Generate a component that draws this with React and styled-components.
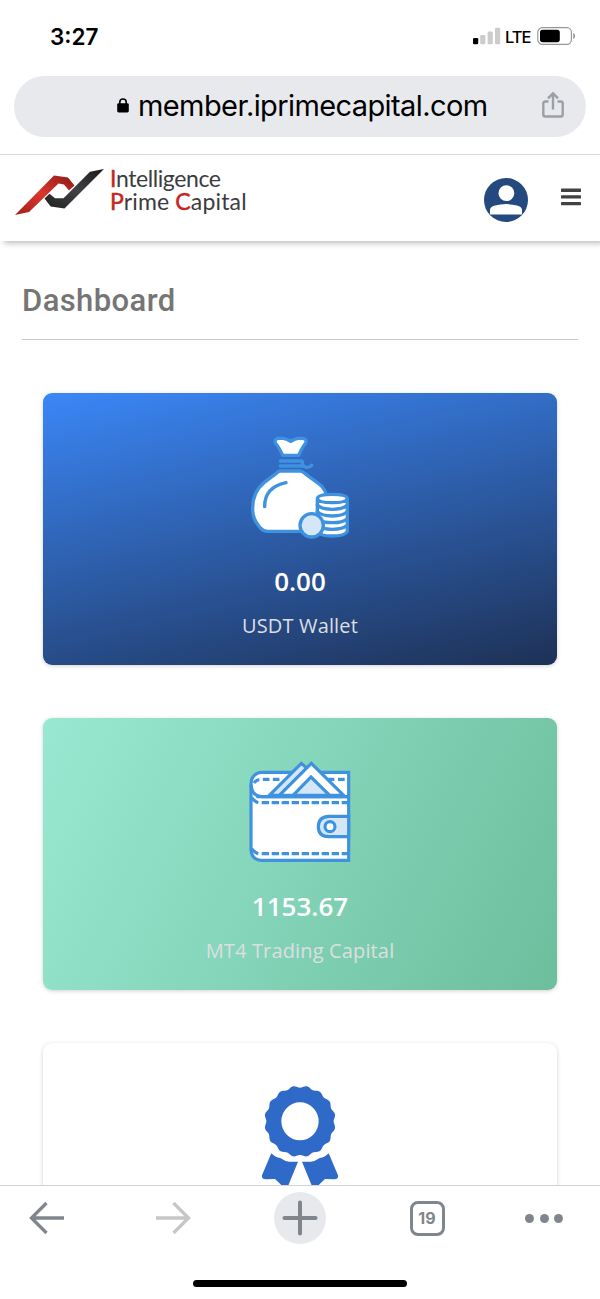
import React from 'react'
import styled, { createGlobalStyle } from 'styled-components'

const scallop = (cx, cy, r, amp, count) => {
  const points = []
  for (let i = 0; i < 192; i++) {
    const a = (i / 192) * Math.PI * 2
    const d = r - amp * Math.cos(a * count)
    points.push(`${(cx + d * Math.sin(a)).toFixed(1)} ${(cy - d * Math.cos(a)).toFixed(1)}`)
  }
  return `M${points.join('L')}Z`
}

const SignalIcon = () => (
  <svg width="28" height="18" viewBox="0 0 28 18">
    <rect x="0" y="11" width="5.2" height="6.2" rx="1.2" fill="#000" />
    <rect x="7.2" y="8" width="5.2" height="9.2" rx="1.2" fill="#ccc" />
    <rect x="14.6" y="4.5" width="5.2" height="12.7" rx="1.2" fill="#ccc" />
    <rect x="22" y="0.8" width="5.2" height="16.4" rx="1.2" fill="#ccc" />
  </svg>
)

const BatteryIcon = () => (
  <svg width="39" height="18" viewBox="0 0 39 18">
    <rect x="0.8" y="0.7" width="33.6" height="16.6" rx="4.6" fill="none" stroke="#999" strokeWidth="1.2" />
    <rect x="3" y="2.8" width="19.8" height="12.4" rx="2.6" fill="#000" />
    <path d="M36.2 6v6c2.6-1 2.6-5 0-6z" fill="#999" />
  </svg>
)

const LockIcon = () => (
  <svg width="12" height="15" viewBox="0 0 12 15">
    <path d="M2.8 7V4.2a3.2 3.2 0 0 1 6.4 0V7" fill="none" stroke="#000" strokeWidth="1.6" />
    <rect x="0.2" y="5.2" width="11.6" height="9.2" rx="1.4" fill="#000" />
  </svg>
)

const ShareIcon = () => (
  <svg width="22" height="27" viewBox="0 0 22 27" fill="none" stroke="#9aa0a6" strokeWidth="2.4">
    <path d="M6.500 9.500H3.200Q1.300 9.500 1.300 11.500v11q0 2 2 2h15.400q2 0 2-2v-11q0-2-1.900-2H15.500" />
    <path d="M11 17.500V1.800M6 6.300l5-5 5 5" />
  </svg>
)

const LogoMark = () => (
  <svg width="90" height="48" viewBox="0 0 90 48">
    <defs>
      <linearGradient id="red" x1="0" y1="1" x2="1" y2="0">
        <stop offset="0" stopColor="#a71d1a" />
        <stop offset="0.5" stopColor="#d8372f" />
        <stop offset="1" stopColor="#8d1916" />
      </linearGradient>
      <linearGradient id="dark" x1="0" y1="1" x2="1" y2="0">
        <stop offset="0" stopColor="#1f1f20" />
        <stop offset="0.5" stopColor="#414244" />
        <stop offset="1" stopColor="#19191a" />
      </linearGradient>
    </defs>
    <path d="M0 46 39 6.500 53 8.500 59.500 16.500 54 21.500 49 15.500 43.500 14.500 14 43z" fill="url(#red)" />
    <path d="M89 0 75 2.800 48.500 29.300 40 29.300 34.500 24.700 29.500 29.500 35.700 37.500 49.500 39.400z" fill="url(#dark)" />
  </svg>
)

const UserIcon = () => (
  <svg width="44" height="44" viewBox="0 0 44 44">
    <circle cx="22" cy="22" r="22" fill="#24497f" />
    <circle cx="22.400" cy="15.200" r="7.900" fill="#fff" />
    <path d="M6 36.500V32q0-3 5-4.400 11-3 22 0 5 1.400 5 4.400v4.500z" fill="#fff" />
  </svg>
)

const MenuIcon = () => (
  <svg width="20" height="18" viewBox="0 0 20 18" fill="#424242">
    <rect y="0.600" width="20" height="3.300" rx="0.600" />
    <rect y="7.300" width="20" height="3.300" rx="0.600" />
    <rect y="13.900" width="20" height="3.300" rx="0.600" />
  </svg>
)

const MoneyBagIcon = () => (
  <svg width="102" height="104" viewBox="57 48 306 312" stroke="#3f92df" strokeWidth="10" strokeLinejoin="round" strokeLinecap="round">
    <path d="M158 106C151 91 145 79 136 69Q132 56 146 55H160Q172 57 182 64Q192 57 204 55H217Q232 56 227 69C218 79 213 91 206 106z" fill="#fff" />
    <path d="M151 123H215Q218 124 217 129Q216 139 229 142Q240 143 245 136M151 138H217" fill="none" />
    <path d="M150 153H211Q218 155 224 160L261 187Q290 205 294 245L280 334H113Q99 334 90 323Q66 296 68 264C68 232 79 207 102 188L139 160Q144 154 150 153z" fill="#fff" />
    <path d="M104 260Q103 202 168 188" fill="none" />
    <path d="M262 235V334Q268 348 307 348T352 334V235Q346 223 307 223T262 235z" fill="#fff" stroke="none" />
    <path d="M262 236Q263 223 307 223T352 236Q348 248 307 248T262 236zV334Q268 348 307 348T352 334V236" fill="none" />
    <path d="M262 255Q275 268 307 268T352 255M262 275Q275 288 307 288T352 275M262 296Q275 308 307 308T352 296M262 316Q275 328 307 328T352 316" fill="none" />
    <circle cx="245" cy="316" r="35" fill="#d5e7f7" />
  </svg>
)

const WalletIcon = () => (
  <svg width="102" height="104" viewBox="58 36 306 312" stroke="#3f92df" strokeWidth="9.5" fill="none">
    <path d="M357 70H93Q64 75 64 106V303Q67 334 96 334H357z" fill="#fff" />
    <path d="M64 106Q66 141 96 143H357" />
    <path d="M73 102Q80 91 94 91H155M296 91H314M325 91H346" strokeDasharray="20 10" />
    <path d="M119 139 215 43 232 58 151 139z" fill="#d5e7f7" />
    <path d="M149 139 245 43 342 139z" fill="#fff" />
    <path d="M190 139 244 84 300 139z" fill="#d5e7f7" />
    <path d="M80 143H357" />
    <path d="M66 146Q76 158 86 161M66 299Q76 311 86 314" />
    <path d="M96 161H357M96 314H357" strokeDasharray="22 8" />
    <path d="M357 202H297Q266 204 266 233T297 263H357z" fill="#d5e7f7" />
    <circle cx="301" cy="233" r="15" fill="#fff" />
  </svg>
)

const AwardIcon = () => (
  <svg width="80" height="110" viewBox="60 47 240 330" fill="#306ac8">
    <path fillRule="evenodd" d={scallop(180, 153, 104, 3, 16) + 'M124 153a56 57 0 1 0 112 0a56 57 0 1 0-112 0z'} />
    <path d="M94 249 66 315Q64 326 77 327L105 326 128 348Q139 355 145 345L174 274Q160 275 147 274 135 273 121 263 105 261 94 249z" />
    <path d="M266 249 294 315Q296 326 283 327L255 326 232 348Q221 355 215 345L186 274Q200 275 213 274 225 273 239 263 255 261 266 249z" />
  </svg>
)

const BackIcon = () => (
  <svg width="36" height="34" viewBox="0 0 36 34" fill="none" stroke="currentColor" strokeWidth="3.300">
    <path d="M35 17H3M17.500 2 2.500 17l15 15" />
  </svg>
)

const PlusIcon = () => (
  <svg width="36" height="36" viewBox="0 0 36 36" stroke="#80868b" strokeWidth="4" strokeLinecap="round">
    <path d="M18 2.500v31M2.500 18h31" />
  </svg>
)

const App = () => {
  return (
    <>
      <GlobalStyle />
      <Screen>
        <StatusBar>
          <Time>3:27</Time>
          <StatusIcons>
            <SignalIcon />
            <Network>LTE</Network>
            <BatteryIcon />
          </StatusIcons>
        </StatusBar>
        <AddressRow>
          <AddressBar>
            <LockIcon />
            <Url>member.iprimecapital.com</Url>
            <ShareIcon />
          </AddressBar>
        </AddressRow>
        <Header>
          <LogoMark />
          <LogoText>
            <LogoLine $spacing="-0.4px"><b>I</b>ntelligence</LogoLine>
            <LogoLine $spacing="0.15px"><b>P</b>rime <b>C</b>apital</LogoLine>
          </LogoText>
          <Profile><UserIcon /></Profile>
          <Burger><MenuIcon /></Burger>
        </Header>
        <Content>
          <Title>Dashboard</Title>
          <Cards>
            <Card $bg="linear-gradient(167deg, #3b87f7 0%, #1e3156 100%)">
              <MoneyBagIcon />
              <Amount>0.00</Amount>
              <Label>USDT Wallet</Label>
            </Card>
            <Card $bg="linear-gradient(115deg, #99e9d2 0%, #6cbe9d 100%)">
              <WalletIcon />
              <Amount>1153.67</Amount>
              <Label>MT4 Trading Capital</Label>
            </Card>
            <Card $bg="#fff">
              <AwardIcon />
            </Card>
          </Cards>
        </Content>
        <Toolbar>
          <NavButton><BackIcon /></NavButton>
          <NavButton $forward><BackIcon /></NavButton>
          <NewTab><PlusIcon /></NewTab>
          <TabCount>19</TabCount>
          <Dots><span /><span /><span /></Dots>
        </Toolbar>
        <HomeArea><HomeIndicator /></HomeArea>
      </Screen>
    </>
  )
}

export default App

const GlobalStyle = createGlobalStyle`
*{
    box-sizing: border-box;
}
body{
    margin: 0;
    background: #fff;
}
svg{
    display: block;
    flex-shrink: 0;
}
`

const Screen = styled.div`
display: flex;
flex-direction: column;
width: 600px;
height: 1299px;
overflow: hidden;
background: #fff;
`

const StatusBar = styled.div`
display: flex;
justify-content: space-between;
align-items: center;
flex-shrink: 0;
height: 76px;
padding: 0 24px 4px 50px;
font-family: Inter, sans-serif;
color: #000;
`

const Time = styled.span`
font-size: 22.5px;
font-weight: 600;
`

const StatusIcons = styled.div`
display: flex;
align-items: center;
gap: 4px;
`

const Network = styled.span`
width: 28px;
padding-top: 1px;
font-size: 16.5px;
font-weight: 500;
letter-spacing: -1px;
white-space: nowrap;
`

const AddressRow = styled.div`
position: relative;
z-index: 1;
flex-shrink: 0;
height: 79px;
padding: 0 14px;
border-bottom: 1px solid #d8d8d8;
background: #fff;
`

const AddressBar = styled.div`
display: flex;
align-items: center;
height: 61px;
padding: 0 22px 2px 103px;
border-radius: 31px;
background: #e8e9ed;
`

const Url = styled.span`
flex: 1;
margin-left: 9px;
font-family: Inter, sans-serif;
font-size: 29px;
letter-spacing: -0.6px;
color: #000;
`

const Header = styled.header`
display: flex;
flex-shrink: 0;
height: 86px;
padding: 14px 19px 0 15px;
background: #fff;
box-shadow: 4px 2px 6px rgba(0, 0, 0, 0.28);
`

const LogoText = styled.div`
flex: 1;
margin: -2px 0 0 5px;
`

const LogoLine = styled.div`
height: 23px;
line-height: 23px;
font-family: Lato, sans-serif;
font-size: 23px;
letter-spacing: ${({ $spacing }) => $spacing};
color: #3c3c3e;
white-space: nowrap;
b{
    font-weight: 400;
    color: #c6241f;
    -webkit-text-stroke: 0.5px #c6241f;
}
`

const Profile = styled.div`
margin-top: 9px;
`

const Burger = styled.div`
margin: 19px 0 0 33px;
`

const Content = styled.main`
flex: 1;
min-height: 0;
padding: 38px 22px 0;
overflow: hidden;
`

const Title = styled.h1`
height: 61px;
margin: 0;
border-bottom: 1px solid #c8c8c8;
font-family: Roboto, sans-serif;
font-size: 31px;
font-weight: 500;
line-height: 43px;
letter-spacing: 0.4px;
color: #757575;
`

const Cards = styled.div`
display: flex;
flex-direction: column;
gap: 53px;
padding: 53px 21px 0;
`

const Card = styled.section`
display: flex;
flex-direction: column;
align-items: center;
flex-shrink: 0;
height: 272px;
padding-top: 43px;
border-radius: 9px;
background: ${({ $bg }) => $bg};
box-shadow: 0 1px 4px rgba(0, 0, 0, 0.18);
font-family: "Open Sans", sans-serif;
`

const Amount = styled.div`
margin-top: 23px;
font-size: 26px;
font-weight: 600;
line-height: 36px;
color: #fff;
`

const Label = styled.div`
margin-top: 12px;
font-size: 20px;
line-height: 30px;
letter-spacing: 0.15px;
color: #dcdfe0;
`

const Toolbar = styled.nav`
display: grid;
grid-template-columns: 94px 158px 96px 158px 76px;
place-items: center;
flex-shrink: 0;
height: 65px;
border-top: 1px solid #d2d2d2;
background: #fff;
`

const NavButton = styled.div`
color: ${({ $forward }) => ($forward ? '#c6c6c6' : '#80868b')};
transform: ${({ $forward }) => ($forward ? 'scaleX(-1)' : 'none')};
`

const NewTab = styled.div`
display: grid;
place-items: center;
width: 52px;
height: 52px;
border-radius: 50%;
background: #e8e9ed;
`

const TabCount = styled.div`
display: grid;
place-items: center;
width: 35px;
height: 35px;
border: 3px solid #80868b;
border-radius: 8px;
font-family: Inter, sans-serif;
font-size: 16px;
font-weight: 700;
color: #80868b;
`

const Dots = styled.div`
display: flex;
gap: 5.500px;
span{
    width: 9px;
    height: 9px;
    border-radius: 50%;
    background: #80868b;
}
`

const HomeArea = styled.div`
display: flex;
justify-content: center;
flex-shrink: 0;
height: 49px;
padding-top: 30px;
background: #fff;
`

const HomeIndicator = styled.div`
width: 214px;
height: 7px;
border-radius: 4px;
background: #000;
`
